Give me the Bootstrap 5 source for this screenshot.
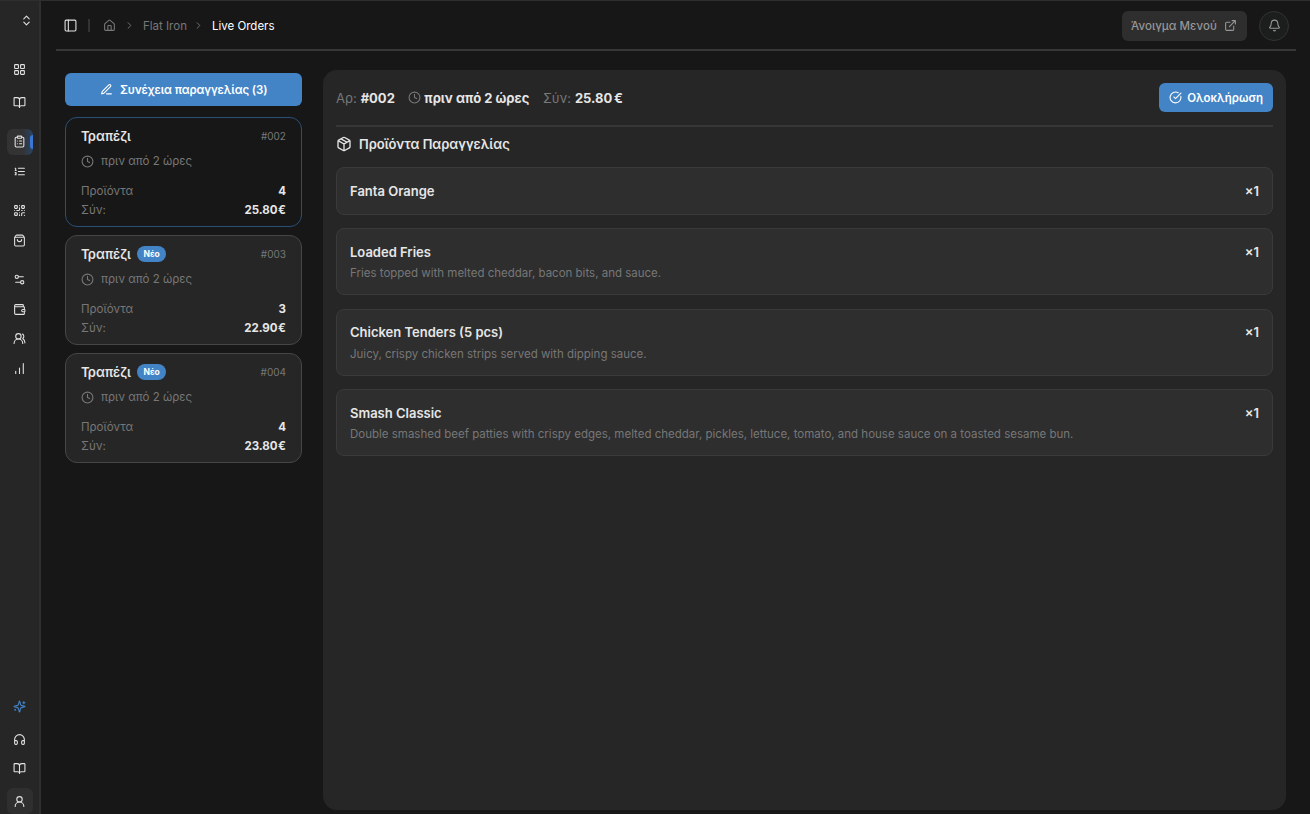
<!DOCTYPE html>
<html lang="el">
<head>
<meta charset="utf-8">
<title>Live Orders</title>
<meta name="viewport" content="width=device-width, initial-scale=1">
<link href="https://cdn.jsdelivr.net/npm/bootstrap@5.3.0/dist/css/bootstrap.min.css" rel="stylesheet">
<style>
body{background:#171717;color:#e6e6e6;font-family:Inter,"Liberation Sans",sans-serif;font-size:11.5px;line-height:18px;border-top:1px solid #2e2e2e}
svg{fill:none;stroke:currentColor;stroke-width:2;stroke-linecap:round;stroke-linejoin:round;flex:none;display:block}
.side{width:41px;background:#262626;border-right:2px solid #2f2f2f;flex:none}
.side a{color:#e2e2e2;width:26px;height:26px;margin-left:7px;padding:0 1px 0 0;border-radius:6px;flex:none;display:flex;align-items:center;justify-content:center}
.side svg{width:13px;height:13px}
.side .on{background:linear-gradient(90deg,#333 60%,#294468);position:relative}
.side .on::after{content:"";position:absolute;right:0;top:6px;width:3px;height:14px;border-radius:3px 0 0 3px;background:#3b76d4}
.top{height:50px;margin:0 14px 0 15px;border-bottom:2px solid #373737;padding:1px 7px 0 9px}
.crumb{color:#777}
.menu-btn{height:30px;width:125px;border-radius:6px;background:#2e2e2e;color:#969696;font-weight:500;border:0;padding:0 10px 0 9px}
.bell{width:30px;height:30px;border-radius:50%;border:1px solid #333;background:#1c1d1d;color:#969696}
.orders{width:236.6px;margin:22px 0 0 24.4px;flex:none}
.blue{background:#4384c7;color:#fff;border:0;border-radius:6px;font-size:11.5px;font-weight:600}
.order{height:110px;border:1px solid #464646;background:#262626;border-radius:12px;padding:9px 15px 0 14.6px;margin-bottom:8px}
.order.sel{background:#171717;border-color:#2b5078}
.muted{color:#777}
.ttl{font-size:13px;font-weight:600}
.new{background:#4384c7;color:#fff;font-size:8.5px;font-weight:700;height:16px;line-height:16px;padding:0 6.5px;border-radius:8px;margin-left:6px}
.num{font-size:10px}
.amt{font-weight:700;word-spacing:-2.2px}
.when{gap:7px;margin:7px 0 11.5px}
.panel{background:#262626;border-radius:14px;margin:19px 24px 4px 21px;padding:13px}
.phead{height:44px;border-bottom:2px solid #373737;margin-bottom:8px;padding-bottom:13px}
.phead .sum{word-spacing:-1.5px}
.big{font-size:13px}
.item{background:#2e2e2e;border:1px solid #3a3a3a;border-radius:8px;padding:13.6px 13px 12.6px;margin-bottom:13.2px}
.nm{font-size:13px;font-weight:600;line-height:19.500px}
.ds{color:#777;font-size:11.5px;line-height:16.500px;margin-top:3px}
</style>
</head>
<body class="d-flex vh-100 overflow-hidden">
<svg width="0" height="0" class="position-absolute"><defs>
<symbol id="updown" viewBox="0 0 24 24"><path d="m7 15 5 5 5-5M7 9l5-5 5 5"/></symbol>
<symbol id="grid" viewBox="0 0 24 24"><rect width="7" height="7" x="3" y="3" rx="1"/><rect width="7" height="7" x="14" y="3" rx="1"/><rect width="7" height="7" x="14" y="14" rx="1"/><rect width="7" height="7" x="3" y="14" rx="1"/></symbol>
<symbol id="book" viewBox="0 0 24 24"><path d="M12 7v14M3 18a1 1 0 0 1-1-1V4a1 1 0 0 1 1-1h5a4 4 0 0 1 4 4 4 4 0 0 1 4-4h5a1 1 0 0 1 1 1v13a1 1 0 0 1-1 1h-6a3 3 0 0 0-3 3 3 3 0 0 0-3-3z"/></symbol>
<symbol id="clip" viewBox="0 0 24 24"><rect width="8" height="4" x="8" y="2" rx="1"/><path d="M16 4h2a2 2 0 0 1 2 2v14a2 2 0 0 1-2 2H6a2 2 0 0 1-2-2V6a2 2 0 0 1 2-2h2M12 11h4M12 16h4M8 11h.01M8 16h.01"/></symbol>
<symbol id="list" viewBox="0 0 24 24"><path d="M10 12h11M10 18h11M10 6h11M4 10h2M4 6h1v4M6 18H4c0-1 2-2 2-3s-1-1.500-2-1"/></symbol>
<symbol id="qr" viewBox="0 0 24 24"><rect width="5" height="5" x="3" y="3" rx="1"/><rect width="5" height="5" x="16" y="3" rx="1"/><rect width="5" height="5" x="3" y="16" rx="1"/><path d="M21 16h-3a2 2 0 0 0-2 2v3M21 21v.01M12 7v3a2 2 0 0 1-2 2H7M3 12h.01M12 3h.01M12 16v.01M16 12h1M21 12v.01M12 21v-1"/></symbol>
<symbol id="bag" viewBox="0 0 24 24"><path d="M16 10a4 4 0 0 1-8 0M3.100 6.030h17.800M3.400 5.470A2 2 0 0 0 3 6.670V20a2 2 0 0 0 2 2h14a2 2 0 0 0 2-2V6.670a2 2 0 0 0-.4-1.200l-2-2.670A2 2 0 0 0 17 2H7a2 2 0 0 0-1.600.8z"/></symbol>
<symbol id="sliders" viewBox="0 0 24 24"><path d="M14 17H5M19 7h-9"/><circle cx="17" cy="17" r="3"/><circle cx="7" cy="7" r="3"/></symbol>
<symbol id="wallet" viewBox="0 0 24 24"><path d="M19 7V4a1 1 0 0 0-1-1H5a2 2 0 0 0 0 4h15a1 1 0 0 1 1 1v4h-3a2 2 0 0 0 0 4h3a1 1 0 0 0 1-1v-2a1 1 0 0 0-1-1M3 5v14a2 2 0 0 0 2 2h15a1 1 0 0 0 1-1v-4"/></symbol>
<symbol id="users" viewBox="0 0 24 24"><path d="M18 21a8 8 0 0 0-16 0M22 20c0-3.370-2-6.500-4-8a5 5 0 0 0-.45-8.300"/><circle cx="10" cy="8" r="5"/></symbol>
<symbol id="bars" viewBox="0 0 24 24"><path d="M5 21v-4M12 21V11M19 21V3"/></symbol>
<symbol id="spark" viewBox="0 0 24 24"><path d="M9.937 15.500A2 2 0 0 0 8.500 14.063l-6.135-1.582a.5.5 0 0 1 0-.962L8.500 9.936A2 2 0 0 0 9.937 8.500l1.582-6.135a.5.5 0 0 1 .963 0L14.063 8.500A2 2 0 0 0 15.500 9.937l6.135 1.581a.5.5 0 0 1 0 .964L15.500 14.063a2 2 0 0 0-1.437 1.437l-1.582 6.135a.5.5 0 0 1-.963 0zM20 3v4M22 5h-4M4 17v2M5 18H3"/></symbol>
<symbol id="head" viewBox="0 0 24 24"><path d="M3 14h3a2 2 0 0 1 2 2v3a2 2 0 0 1-2 2H5a2 2 0 0 1-2-2v-7a9 9 0 0 1 18 0v7a2 2 0 0 1-2 2h-1a2 2 0 0 1-2-2v-3a2 2 0 0 1 2-2h3"/></symbol>
<symbol id="user" viewBox="0 0 24 24"><circle cx="12" cy="8" r="5"/><path d="M20 21a8 8 0 0 0-16 0"/></symbol>
<symbol id="panel" viewBox="0 0 24 24"><rect width="20" height="20" x="2" y="2" rx="2"/><path d="M8 2v20"/></symbol>
<symbol id="home" viewBox="0 0 24 24"><path d="M15 21v-8a1 1 0 0 0-1-1h-4a1 1 0 0 0-1 1v8"/><path d="M3 10a2 2 0 0 1 .709-1.528l7-6a2 2 0 0 1 2.582 0l7 6A2 2 0 0 1 21 10v9a2 2 0 0 1-2 2H5a2 2 0 0 1-2-2z"/></symbol>
<symbol id="chev" viewBox="0 0 24 24"><path d="m9 18 6-6-6-6"/></symbol>
<symbol id="ext" viewBox="0 0 24 24"><path d="M15 3h6v6M10 14 21 3M18 13v6a2 2 0 0 1-2 2H5a2 2 0 0 1-2-2V8a2 2 0 0 1 2-2h6"/></symbol>
<symbol id="bell" viewBox="0 0 24 24"><path d="M10.268 21a2 2 0 0 0 3.464 0M3.262 15.326A1 1 0 0 0 4 17h16a1 1 0 0 0 .74-1.673C19.410 13.956 18 12.499 18 8A6 6 0 0 0 6 8c0 4.499-1.411 5.956-2.738 7.326"/></symbol>
<symbol id="pen" viewBox="0 0 24 24"><path d="M12 20h9M16.376 3.622a1 1 0 0 1 3.002 3.002L7.368 18.635a2 2 0 0 1-.855.506l-2.872.838a.5.5 0 0 1-.62-.62l.838-2.872a2 2 0 0 1 .506-.854z"/></symbol>
<symbol id="clock" viewBox="0 0 24 24"><circle cx="12" cy="12" r="10"/><path d="M12 6v6l4 2"/></symbol>
<symbol id="check" viewBox="0 0 24 24"><path d="M21.801 10A10 10 0 1 1 17 3.335M9 11l3 3L22 4"/></symbol>
<symbol id="box" viewBox="0 0 24 24"><path d="M11 21.730a2 2 0 0 0 2 0l7-4A2 2 0 0 0 21 16V8a2 2 0 0 0-1-1.730l-7-4a2 2 0 0 0-2 0l-7 4A2 2 0 0 0 3 8v8a2 2 0 0 0 1 1.730zM12 22V12M3.290 7 12 12l8.710-5M7.500 4.270l9 5.150"/></symbol>
</defs></svg>

<aside class="side d-flex flex-column">
  <a href="#" style="margin:6.5px 0 0 13.5px"><svg><use href="#updown"/></svg></a>
  <a href="#" style="margin-top:23px"><svg><use href="#grid"/></svg></a>
  <a href="#" style="margin-top:6.5px"><svg><use href="#book"/></svg></a>
  <a href="#" class="on" style="margin-top:13.5px"><svg><use href="#clip"/></svg></a>
  <a href="#" style="margin-top:4px"><svg><use href="#list"/></svg></a>
  <a href="#" style="margin-top:13px"><svg><use href="#qr"/></svg></a>
  <a href="#" style="margin-top:3.500px"><svg><use href="#bag"/></svg></a>
  <a href="#" style="margin-top:13.500px"><svg><use href="#sliders"/></svg></a>
  <a href="#" style="margin-top:3.500px"><svg><use href="#wallet"/></svg></a>
  <a href="#" style="margin-top:3.500px"><svg><use href="#users"/></svg></a>
  <a href="#" style="margin-top:3.500px"><svg><use href="#bars"/></svg></a>
  <a href="#" class="mt-auto" style="color:#4384c7"><svg><use href="#spark"/></svg></a>
  <a href="#" style="margin-top:7px"><svg><use href="#head"/></svg></a>
  <a href="#" style="margin-top:3.500px"><svg><use href="#book"/></svg></a>
  <a href="#" style="margin-top:6.500px;background:#2f2f2f"><svg><use href="#user"/></svg></a>
</aside>

<div class="flex-grow-1 d-flex flex-column">
  <header class="top d-flex align-items-center justify-content-between">
    <nav class="crumb d-flex align-items-center">
      <svg width="13" height="13" style="color:#e2e2e2;margin-left:-1px"><use href="#panel"/></svg>
      <span style="width:2px;height:13px;background:#333;margin:0 13px 0 11px"></span>
      <svg width="13" height="13"><use href="#home"/></svg>
      <svg width="11" height="11" style="margin:0 8px 0 8px"><use href="#chev"/></svg>
      <span>Flat Iron</span>
      <svg width="11" height="11" style="margin:0 8px 0 6px"><use href="#chev"/></svg>
      <span class="text-white">Live Orders</span>
    </nav>
    <div class="d-flex align-items-center" style="gap:12px">
      <button class="menu-btn d-flex align-items-center justify-content-between"><span>Άνοιγμα Μενού</span><svg width="13" height="13"><use href="#ext"/></svg></button>
      <span class="bell d-flex align-items-center justify-content-center"><svg width="13" height="13"><use href="#bell"/></svg></span>
    </div>
  </header>
  <div class="flex-grow-1 d-flex">
    <section class="orders">
      <button class="blue w-100 d-flex align-items-center justify-content-center" style="height:33px;gap:7px;margin-bottom:11.4px"><svg width="13" height="13"><use href="#pen"/></svg><span style="letter-spacing:-.1px">Συνέχεια παραγγελίας (3)</span></button>
      <div class="order sel">
        <div class="d-flex align-items-center"><span class="ttl">Τραπέζι</span><span class="num muted ms-auto">#002</span></div>
        <div class="when d-flex align-items-center muted"><svg width="13" height="13"><use href="#clock"/></svg>πριν από 2 ώρες</div>
        <div class="d-flex justify-content-between"><span class="muted">Προϊόντα</span><span class="amt">4</span></div>
        <div class="d-flex justify-content-between" style="margin-top:1px"><span class="muted">Σύν:</span><span class="amt">25.80 €</span></div>
      </div>
      <div class="order">
        <div class="d-flex align-items-center"><span class="ttl">Τραπέζι</span><span class="new">Νέο</span><span class="num muted ms-auto">#003</span></div>
        <div class="when d-flex align-items-center muted"><svg width="13" height="13"><use href="#clock"/></svg>πριν από 2 ώρες</div>
        <div class="d-flex justify-content-between"><span class="muted">Προϊόντα</span><span class="amt">3</span></div>
        <div class="d-flex justify-content-between" style="margin-top:1px"><span class="muted">Σύν:</span><span class="amt">22.90 €</span></div>
      </div>
      <div class="order">
        <div class="d-flex align-items-center"><span class="ttl">Τραπέζι</span><span class="new">Νέο</span><span class="num muted ms-auto">#004</span></div>
        <div class="when d-flex align-items-center muted"><svg width="13" height="13"><use href="#clock"/></svg>πριν από 2 ώρες</div>
        <div class="d-flex justify-content-between"><span class="muted">Προϊόντα</span><span class="amt">4</span></div>
        <div class="d-flex justify-content-between" style="margin-top:1px"><span class="muted">Σύν:</span><span class="amt">23.80 €</span></div>
      </div>
    </section>
    <section class="panel flex-grow-1">
      <div class="phead d-flex align-items-center big">
        <span class="muted">Αρ:</span><b class="fw-bold" style="margin-left:4px">#002</b>
        <svg class="muted" width="13" height="13" style="margin:0 3.5px 0 13px"><use href="#clock"/></svg><b class="fw-bold">πριν από 2 ώρες</b>
        <span class="muted" style="margin-left:13.5px">Σύν:</span><b class="sum fw-bold" style="margin-left:4px">25.80 €</b>
        <button class="blue ms-auto d-flex align-items-center justify-content-between" style="width:114px;height:29px;padding:0 10px"><svg width="13" height="13"><use href="#check"/></svg>Ολοκλήρωση</button>
      </div>
      <div class="d-flex align-items-center big fw-semibold" style="gap:7px;margin-bottom:14.3px"><svg width="16" height="16"><use href="#box"/></svg>Προϊόντα Παραγγελίας</div>
      <div class="item"><div class="nm d-flex justify-content-between"><span>Fanta Orange</span><span>×1</span></div></div>
      <div class="item"><div class="nm d-flex justify-content-between"><span>Loaded Fries</span><span>×1</span></div><div class="ds">Fries topped with melted cheddar, bacon bits, and sauce.</div></div>
      <div class="item"><div class="nm d-flex justify-content-between"><span>Chicken Tenders (5 pcs)</span><span>×1</span></div><div class="ds">Juicy, crispy chicken strips served with dipping sauce.</div></div>
      <div class="item"><div class="nm d-flex justify-content-between"><span>Smash Classic</span><span>×1</span></div><div class="ds">Double smashed beef patties with crispy edges, melted cheddar, pickles, lettuce, tomato, and house sauce on a toasted sesame bun.</div></div>
    </section>
  </div>
</div>
<script src="https://cdn.jsdelivr.net/npm/bootstrap@5.3.0/dist/js/bootstrap.bundle.min.js"></script>
</body>
</html>
